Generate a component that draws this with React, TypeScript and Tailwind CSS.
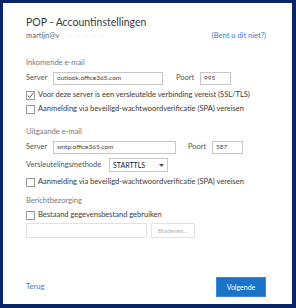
import React from "react";

function Checkbox({ checked }: { checked?: boolean }) {
  return (
    <span className="w-[9px] h-[9px] border border-[#9a9a9a] bg-white flex items-center justify-center shrink-0">
      {checked && (
        <svg width="7" height="7" viewBox="0 0 7 7">
          <path d="M0.8 3.6 L2.7 5.5 L6.3 1.2" fill="none" stroke="#444" strokeWidth="0.9" />
        </svg>
      )}
    </span>
  );
}

function Input({ value, w }: { value?: string; w: string }) {
  return (
    <div className={`${w} h-[13px] border border-[#c6c6c6] bg-white flex items-center px-[3px] text-[6.5px] text-[#444] whitespace-nowrap`}>
      {value}
    </div>
  );
}

export default function App() {
  return (
    <div
      className="w-[296px] h-[308px] bg-[#0b2568] pt-[3px] pl-[3px] pr-[4px] pb-[4px] whitespace-nowrap"
      style={{ fontFamily: 'Lato, "Open Sans", sans-serif' }}
    >
      <div className="w-full h-full bg-white flex flex-col pl-[23px] pr-[26px] pt-[13px]">
        <div className="h-[14px] flex items-center text-[10.5px] text-[#3a3a3a]">
          POP - Accountinstellingen
        </div>
        <div className="h-[12px] flex items-center justify-between text-[7.5px]">
          <div className="flex items-center text-[#666]">
            <span>martijn@v</span>
            <span className="ml-[10px] text-[#e4e4e4] tracking-[6px]">·····</span>
          </div>
          <span className="text-[#2f7ed8]">(Bent u dit niet?)</span>
        </div>

        <div className="mt-[15px] h-[12px] flex items-center text-[7.5px] text-[#777]">Inkomende e-mail</div>
        <div className="mt-[2px] h-[14px] flex items-center text-[7.5px] text-[#555]">
          <span className="w-[27px]">Server</span>
          <Input w="w-[110px]" value="outlook.office365.com" />
          <span className="ml-[13px] w-[24px]">Poort</span>
          <Input w="w-[31px]" value="995" />
        </div>
        <div className="mt-[4px] h-[12px] flex items-center gap-[3px] text-[7.5px] text-[#3a3a3a]">
          <Checkbox checked />
          <span>Voor deze server is een versleutelde verbinding vereist (SSL/TLS)</span>
        </div>
        <div className="mt-[2px] h-[12px] flex items-center gap-[3px] text-[7.5px] text-[#3a3a3a]">
          <Checkbox />
          <span>Aanmelding via beveiligd-wachtwoordverificatie (SPA) vereisen</span>
        </div>

        <div className="mt-[11px] h-[12px] flex items-center text-[7.5px] text-[#777]">Uitgaande e-mail</div>
        <div className="mt-[2px] h-[14px] flex items-center text-[7.5px] text-[#555]">
          <span className="w-[27px]">Server</span>
          <Input w="w-[123px]" value="smtp.office365.com" />
          <span className="ml-[12px] w-[24px]">Poort</span>
          <Input w="w-[31px]" value="587" />
        </div>
        <div className="mt-[4px] h-[14px] flex items-center text-[7.5px] text-[#555]">
          <span className="w-[83px]">Versleutelingsmethode</span>
          <div className="w-[59px] h-[14px] border border-[#c6c6c6] bg-white flex items-center justify-between px-[3px] text-[7px] text-[#222]">
            <span>STARTTLS</span>
            <svg width="5" height="3" viewBox="0 0 5 3">
              <path d="M0 0 L5 0 L2.5 3 Z" fill="#555" />
            </svg>
          </div>
        </div>
        <div className="mt-[4px] h-[12px] flex items-center gap-[3px] text-[7.5px] text-[#3a3a3a]">
          <Checkbox />
          <span>Aanmelding via beveiligd-wachtwoordverificatie (SPA) vereisen</span>
        </div>

        <div className="mt-[7px] h-[12px] flex items-center text-[7.5px] text-[#777]">Berichtbezorging</div>
        <div className="mt-[2px] h-[12px] flex items-center gap-[3px] text-[7.5px] text-[#3a3a3a]">
          <Checkbox />
          <span>Bestaand gegevensbestand gebruiken</span>
        </div>
        <div className="mt-[2px] h-[15px] flex items-center gap-[4px]">
          <div className="w-[121px] h-[15px] border border-[#e2e2e2] bg-white" />
          <div className="w-[44px] h-[15px] border border-[#e2e2e2] bg-white flex items-center justify-center text-[6.5px] text-[#b0b0b0]">
            Bladeren...
          </div>
        </div>

        <div className="mt-auto pb-[7px] flex items-center justify-between">
          <span className="text-[7.5px] text-[#2f7ed8]">Terug</span>
          <div className="w-[50px] h-[20px] bg-[#1b72c9] border border-[#3b8ad8] flex items-center justify-center text-[7px] text-white">
            Volgende
          </div>
        </div>
      </div>
    </div>
  );
}
